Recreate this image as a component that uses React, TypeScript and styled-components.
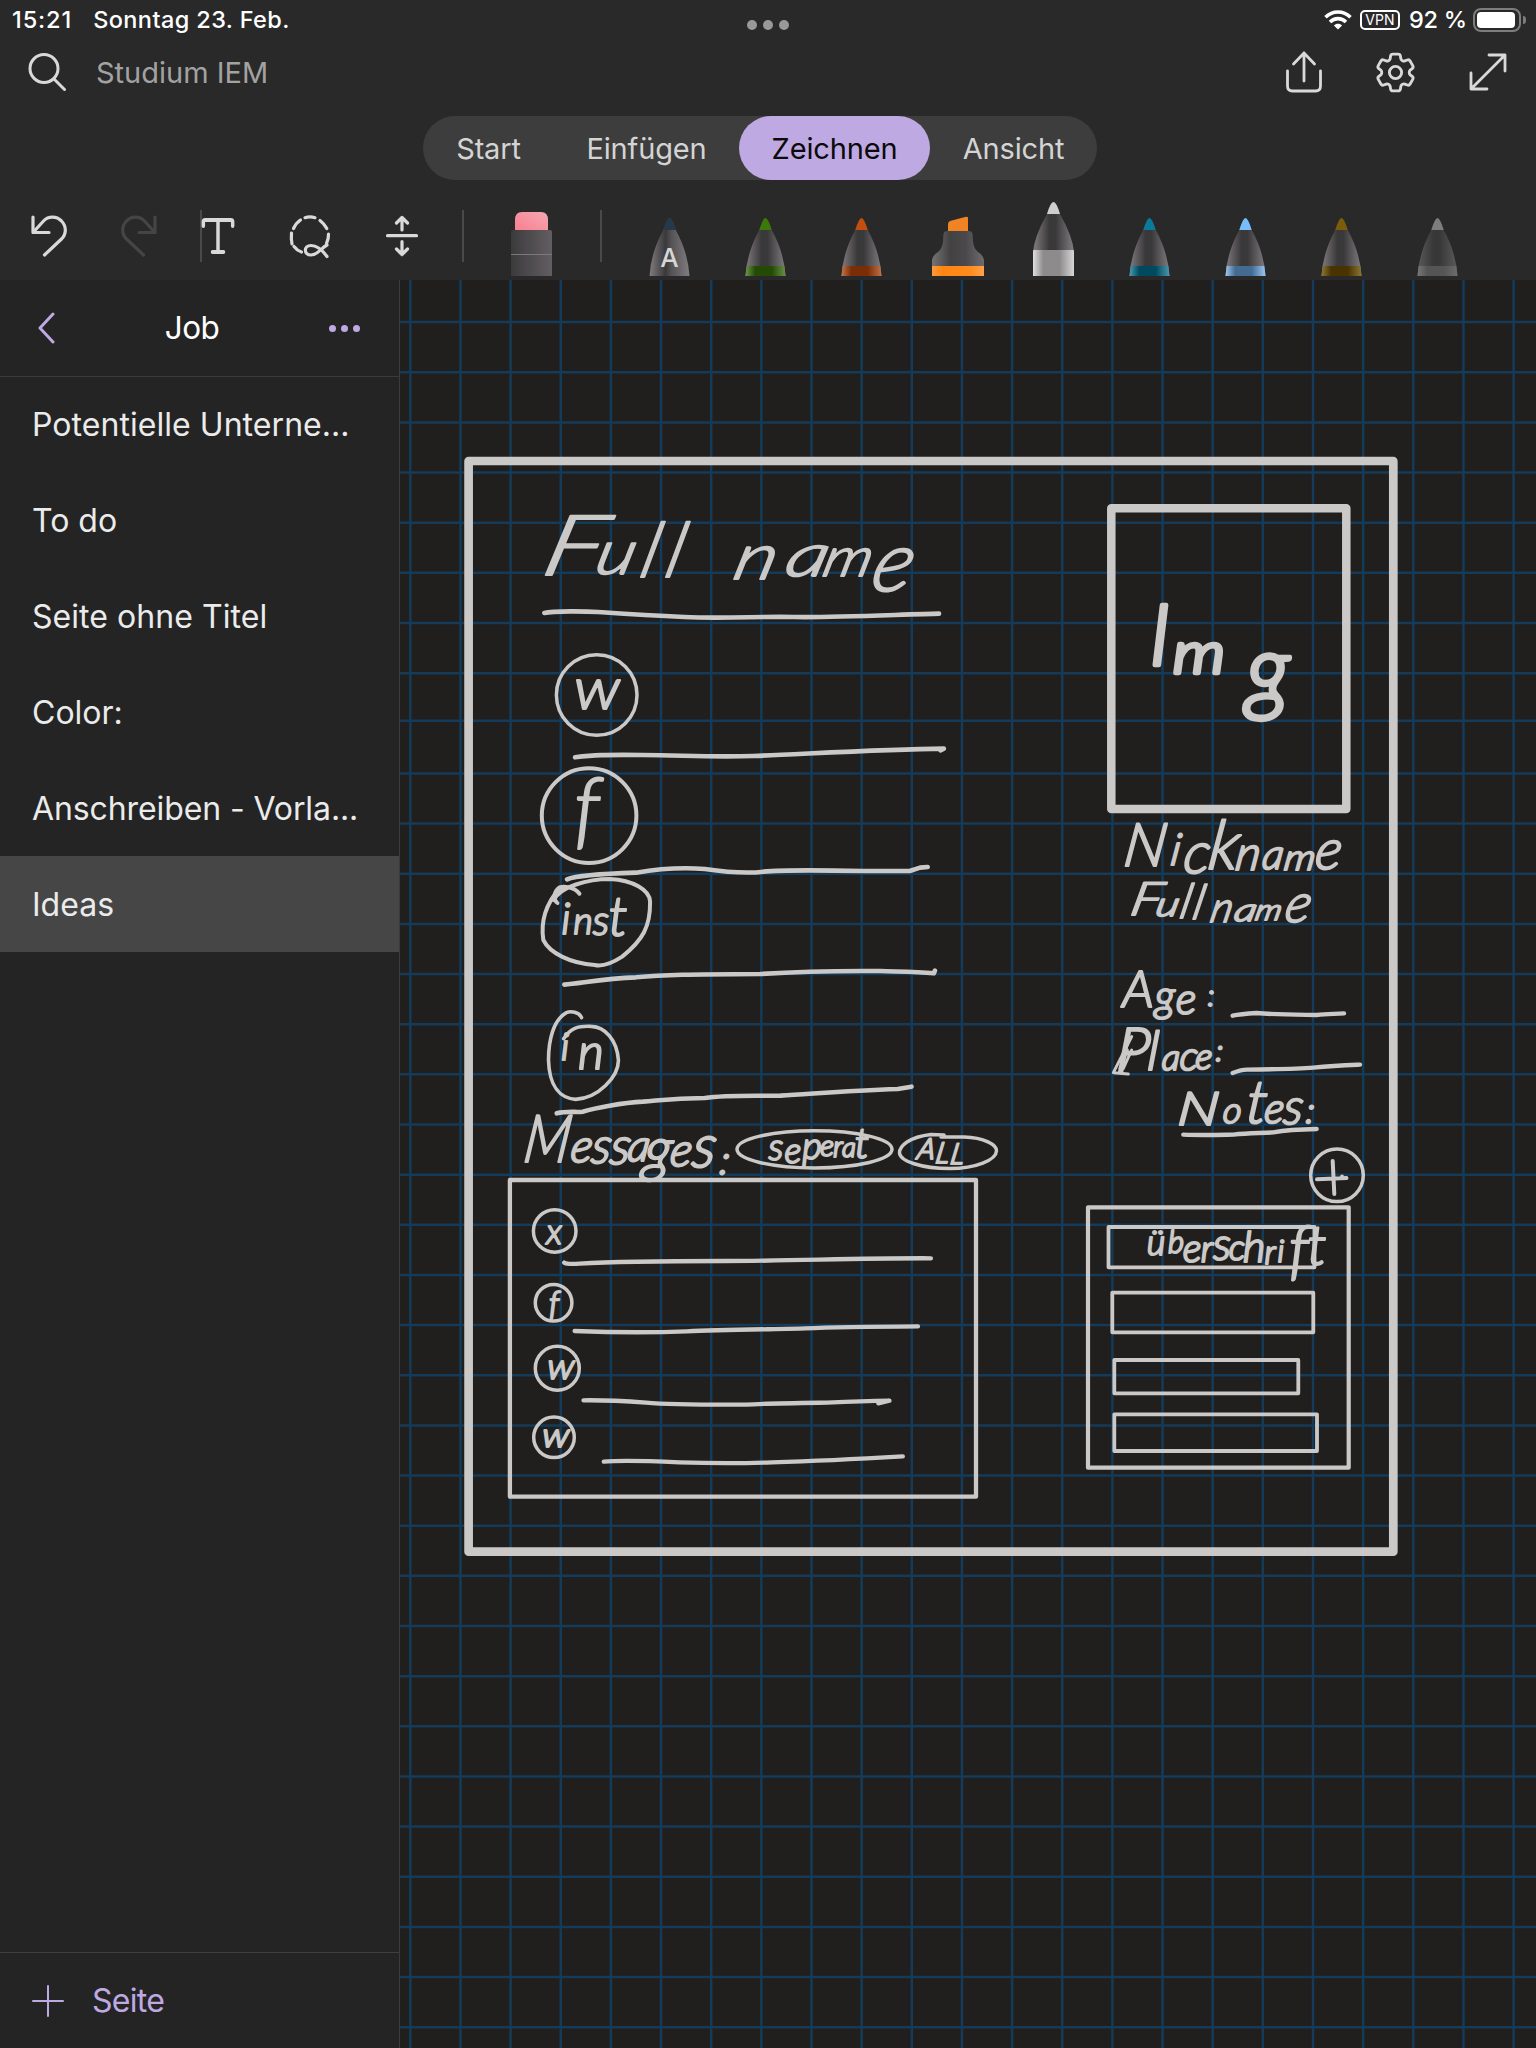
import React from "react";
import styled, { createGlobalStyle } from "styled-components";
import { Type } from "lucide-react";
import { HiOutlineCog6Tooth } from "react-icons/hi2";

const GlobalStyle = createGlobalStyle`
  * { box-sizing: border-box; }
  body { margin: 0; background: #292929; }
`;

const sans = `Inter, "Liberation Sans", sans-serif`;
const INK = "#cbc9c7";
const GRID = "#143b59";

const Screen = styled.div`
  width: 1536px;
  height: 2048px;
  display: flex;
  flex-direction: column;
  overflow: hidden;
  background: #292929;
  font-family: ${sans};
  color: #d9d9d9;
`;

const Header = styled.header`
  flex: none;
  height: 280px;
  display: flex;
  flex-direction: column;
`;

const StatusBar = styled.div`
  height: 40px;
  display: grid;
  grid-template-columns: 1fr auto 1fr;
  align-items: center;
  padding: 0 10px 0 12px;
  color: #fff;
`;

const StatusGroup = styled.div<{ $end?: boolean }>`
  display: flex;
  align-items: center;
  justify-content: ${(p) => (p.$end ? "flex-end" : "flex-start")};
`;

const StatusText = styled.span<{ $gap?: number; $track?: number }>`
  font-size: 23.5px;
  line-height: 40px;
  font-weight: 500;
  white-space: pre;
  margin-left: ${(p) => p.$gap ?? 0}px;
  letter-spacing: ${(p) => p.$track ?? 0}px;
`;

const Multitask = styled.div`
  display: flex;
  gap: 6px;
  padding: 10px 2px 0 0;
`;

const Dot = styled.i<{ $size: number; $color: string }>`
  width: ${(p) => p.$size}px;
  height: ${(p) => p.$size}px;
  border-radius: 50%;
  background: ${(p) => p.$color};
`;

const VpnBadge = styled.span`
  width: 40px;
  height: 20px;
  margin-left: 8px;
  border: 2px solid #fff;
  border-radius: 5px;
  font-size: 14px;
  line-height: 16px;
  text-align: center;
`;

const Battery = styled.span`
  width: 48px;
  height: 24px;
  margin-left: 6px;
  padding: 2px;
  border: 2px solid #7d7d7d;
  border-radius: 8px;
  display: flex;
`;

const BatteryLevel = styled.span`
  width: 38px;
  border-radius: 4px;
  background: #fff;
`;

const BatteryNub = styled.span`
  width: 3px;
  height: 8px;
  margin-left: 2px;
  border-radius: 0 3px 3px 0;
  background: #7d7d7d;
`;

const NavBar = styled.div`
  height: 64px;
  display: flex;
  align-items: center;
  padding: 0 29px 0 28px;
`;

const NotebookTitle = styled.h1`
  margin: 0 0 0 30px;
  flex: 1;
  font-size: 29px;
  font-weight: 400;
  letter-spacing: 0;
  color: #a2a2a2;
`;

const NavActions = styled.div`
  display: flex;
  align-items: center;
  gap: 49px;
`;

const Tabs = styled.nav`
  width: 674px;
  height: 64px;
  margin: 12px 0 0 423px;
  display: flex;
  border-radius: 32px;
  background: #3d3d3d;
`;

const Tab = styled.button<{ $width: number; $active?: boolean }>`
  width: ${(p) => p.$width}px;
  padding: 1px 0 0;
  border: 0;
  border-radius: 32px;
  font-family: ${sans};
  font-size: 29px;
  letter-spacing: -0.15px;
  color: ${(p) => (p.$active ? "#0b0b0b" : "#d4d4d4")};
  background: ${(p) => (p.$active ? "#bea9e2" : "transparent")};
`;

const Toolbar = styled.div`
  height: 100px;
  padding: 0 0 4px 31px;
  display: flex;
  align-items: flex-end;
`;

const Tool = styled.span<{ $gap?: number; $lift?: number }>`
  display: flex;
  margin-left: ${(p) => p.$gap ?? 0}px;
  margin-bottom: ${(p) => p.$lift ?? 20}px;
  svg { display: block; overflow: visible; }
`;

const Separator = styled.span<{ $gap: number }>`
  width: 2px;
  height: 52px;
  margin: 0 0 14px ${(p) => p.$gap}px;
  background: #4a4a4a;
`;

const PenTray = styled.div`
  display: flex;
  align-items: flex-end;
  margin-left: 19.5px;
`;

const PenSlot = styled.span`
  width: 96px;
  display: flex;
  justify-content: center;
  svg { display: block; }
`;

const Body = styled.div`
  flex: 1;
  display: flex;
  min-height: 0;
`;

const Sidebar = styled.aside`
  width: 400px;
  flex: none;
  display: flex;
  flex-direction: column;
  background: #242424;
  border-right: 1px solid #3b3b3b;
`;

const SidebarHeader = styled.div`
  height: 97px;
  padding: 0 39px 0 38px;
  display: flex;
  align-items: center;
  justify-content: space-between;
  border-bottom: 1px solid #3b3b3b;
`;

const SectionTitle = styled.h2`
  margin: 0 0 2px;
  font-size: 31.5px;
  font-weight: 420;
  letter-spacing: -0.6px;
  color: #fff;
`;

const More = styled.span`
  display: flex;
  gap: 5px;
`;

const PageList = styled.ul`
  flex: 1;
  margin: -1px 0 0;
  padding: 0;
  list-style: none;
`;

const PageItem = styled.li<{ $selected?: boolean; $track?: number }>`
  height: 96px;
  padding-left: 32px;
  font-size: 32px;
  line-height: 98px;
  letter-spacing: ${(p) => p.$track ?? 0}px;
  white-space: nowrap;
  color: #ebebeb;
  background: ${(p) => (p.$selected ? "#464646" : "transparent")};
`;

const AddPage = styled.button`
  height: 96px;
  padding: 0 0 0 32px;
  display: flex;
  align-items: center;
  gap: 28px;
  border: 0;
  border-top: 1px solid #3f3f3f;
  background: none;
  font-family: ${sans};
  font-size: 32px;
  letter-spacing: -0.7px;
  color: #bea9e2;
`;

const Canvas = styled.main`
  flex: 1;
  background: #201f1d;
`;

const Page = styled.svg`
  display: block;
  width: 1136px;
  height: 1768px;
`;

const Ink = styled.g`
  fill: none;
  stroke: ${INK};
  stroke-linecap: round;
  stroke-linejoin: round;
  path, ellipse, rect { vector-effect: non-scaling-stroke; }
`;

const Script = styled.text<{ $bold: number }>`
  font-family: Lato, "Liberation Sans", sans-serif;
  font-weight: 300;
  font-style: italic;
  text-anchor: middle;
  fill: ${INK};
  stroke: ${INK};
  stroke-width: ${(p) => p.$bold}px;
  stroke-linejoin: round;
  white-space: pre;
`;

const line = {
  fill: "none",
  stroke: "#d9d9d9",
  strokeWidth: 3,
  strokeLinecap: "round" as const,
  strokeLinejoin: "round" as const,
};

const WifiIcon = () => (
  <svg width="28" height="20" viewBox="0 0 28 20" fill="none" stroke="#fff" strokeWidth="3.6">
    <path d="M1.5 7.2C8.5 0.2 19.5 0.2 26.5 7.2" />
    <path d="M6 12C10.5 7.5 17.5 7.5 22 12" />
    <path d="M14 19.6L9.9 15.4C12.2 13.2 15.8 13.2 18.1 15.4Z" fill="#fff" stroke="none" />
  </svg>
);

const SearchIcon = () => (
  <svg width="38" height="38" viewBox="0 0 38 38" {...line}>
    <circle cx="16" cy="15.5" r="14" />
    <path d="M26 26L36.500 36.500" />
  </svg>
);

const ShareIcon = () => (
  <svg width="36" height="42" viewBox="0 0 36 42" {...line} strokeWidth={2.8}>
    <path d="M18 30V2M7.500 13L18 2L28.500 13" />
    <path d="M1.500 20V35Q1.500 40 6.500 40H29.500Q34.500 40 34.500 35V20" />
  </svg>
);

const ExpandIcon = () => (
  <svg width="38" height="38" viewBox="0 0 38 38" {...line} strokeWidth={2.8}>
    <path d="M2 36L36 2M20 2H36V18M2 20V36H18" />
  </svg>
);

const TurnArrow = ({ flip, color }: { flip?: boolean; color: string }) => (
  <svg width="36" height="40" viewBox="0 0 36 40" {...line} stroke={color} strokeWidth={3.2}>
    <g transform={flip ? "translate(36 0) scale(-1 1)" : undefined}>
      <path d="M2 1V16.500H18" />
      <path d="M2.500 16L12.500 5C17.500 -0.200 25.500 0 30.500 5C35.700 10.500 35.500 18 30.500 23L13.500 39" />
    </g>
  </svg>
);

const LassoIcon = () => (
  <svg width="40" height="42" viewBox="0 0 40 42" {...line} strokeWidth={3.2}>
    <path d="M15 2.700Q20 1 25 2.700M30 5.500Q34.500 9 36.800 13.500M38.500 19Q38.700 24 36.500 28.500M2 29Q1 24 1.500 18M3.500 13.500Q6 8 10.500 5M4 31.500Q7 35.500 11.500 37" />
    <path d="M37 30C31 33 28 40 21 40C13.500 40 13.500 30.500 21 30.500C28 30.500 33 36 37 41.500" />
  </svg>
);

const InsertSpaceIcon = () => (
  <svg width="32" height="40" viewBox="0 0 32 40" {...line} strokeWidth={3.2}>
    <path d="M1.500 19.700H30.500M16 14V1.500M10.500 7L16 1.500L21.500 7M16 25.500V38.500M10.500 33L16 38.500L21.500 33" />
  </svg>
);

const EraserIcon = () => (
  <svg width="41" height="64" viewBox="0 0 41 64">
    <defs>
      <linearGradient id="rubber" x1="0" y1="1" x2="1" y2="0">
        <stop offset="0" stopColor="#fb7c8c" />
        <stop offset="1" stopColor="#f3a9b4" />
      </linearGradient>
      <linearGradient id="sleeve">
        <stop offset="0" stopColor="#3b3a3b" />
        <stop offset="0.3" stopColor="#484648" />
        <stop offset="1" stopColor="#625d61" />
      </linearGradient>
    </defs>
    <path d="M4 20V8Q4 0 11 0H30Q37 0 37 8V20Z" fill="url(#rubber)" />
    <path d="M0 64V20Q0 18 2 18H39Q41 18 41 20V64Z" fill="url(#sleeve)" />
    <path d="M0 42.500H41" stroke="#7b787a" />
  </svg>
);

type PenProps = { id: string; tip: string; band?: [string, string, string]; tall?: boolean; letter?: string; dim?: boolean };

const Pen = ({ id, tip, band, tall, letter, dim }: PenProps) => {
  const h = tall ? 74 : 58;
  const edge = dim ? "#5b5b5b" : "#827d81";
  const mid = dim ? "#383838" : "#3a393a";
  return (
    <svg width="41" height={h} viewBox={`0 0 41 ${h}`}>
      <defs>
        <linearGradient id={`${id}-body`}>
          <stop offset="0" stopColor={edge} />
          <stop offset="0.4" stopColor={mid} />
          <stop offset="0.55" stopColor={letter ? "#555355" : mid} />
          <stop offset="1" stopColor={edge} />
        </linearGradient>
        {band && (
          <linearGradient id={`${id}-band`}>
            <stop offset="0" stopColor={band[0]} />
            <stop offset="0.25" stopColor={band[1]} />
            <stop offset="0.65" stopColor={band[1]} />
            <stop offset="1" stopColor={band[2]} />
          </linearGradient>
        )}
        <clipPath id={`${id}-shape`}>
          <path
            d={
              tall
                ? "M0 74V50Q1.500 34 14 12Q17.500 0 20.500 0Q23.500 0 27 12Q39.500 34 41 50V74Z"
                : "M0.500 58Q2 34 14.300 12Q18 0 20.500 0Q23 0 26.700 12Q39 34 40.500 58Z"
            }
          />
        </clipPath>
      </defs>
      <g clipPath={`url(#${id}-shape)`}>
        <rect width="41" height={h} fill={`url(#${id}-body)`} />
        <rect width="41" height="12" fill={tip} />
        {band && <rect y="48" width="41" height="30" fill={`url(#${id}-band)`} />}
      </g>
      {letter && (
        <text x="20.500" y="48.500" textAnchor="middle" fontFamily="Inter, sans-serif" fontSize="26" fontWeight="500" fill="#d6d6d6">
          {letter}
        </text>
      )}
    </svg>
  );
};

const Highlighter = () => (
  <svg width="52" height="60" viewBox="0 0 52 60">
    <defs>
      <linearGradient id="marker-body">
        <stop offset="0" stopColor="#777275" />
        <stop offset="0.35" stopColor="#434243" />
        <stop offset="0.65" stopColor="#4b494b" />
        <stop offset="1" stopColor="#6f6a6e" />
      </linearGradient>
      <linearGradient id="marker-band">
        <stop offset="0" stopColor="#ff9a3a" />
        <stop offset="0.2" stopColor="#ff8513" />
        <stop offset="0.75" stopColor="#ff8c1d" />
        <stop offset="1" stopColor="#ffa34c" />
      </linearGradient>
    </defs>
    <path d="M16 17V8Q16 6 18 5L33 1Q36 0 36 2V17Z" fill="#f08425" />
    <path d="M0 50V44Q1 39 6 36Q10 33 11 26L11.500 18Q12 15 15 15H37Q40 15 40.500 18L41 26Q42 33 46 36Q51 39 52 44V50Z" fill="url(#marker-body)" />
    <rect y="50" width="52" height="10" fill="url(#marker-band)" />
  </svg>
);

type Letter = [char: string, x: number, y: number, size: number, width?: number];
type WordProps = { letters: Letter[]; slant?: number; bold?: number };

/* A handwritten word: each letter sits at its own centre, height, size and, where given, width. */
const Word = ({ letters, slant = 0, bold = 2 }: WordProps) => {
  const base = letters[0][2];
  return (
    <Script $bold={bold} transform={`translate(0 ${base}) skewX(${-slant})`}>
      {letters.map(([char, x, y, size, width], i) => (
        <tspan
          key={i}
          x={x}
          y={y - base}
          fontSize={size}
          textLength={width}
          lengthAdjust={width ? "spacingAndGlyphs" : undefined}
        >
          {char}
        </tspan>
      ))}
    </Script>
  );
};

const words: WordProps[] = [
  { slant: 14, bold: 1.9, letters: [["F", 569, 575, 84, 60], ["u", 612, 574, 62, 39], ["l", 646, 577, 76], ["l", 671, 577, 76], [" ", 700, 577, 40], ["n", 753, 579, 64, 42], ["a", 804, 576, 60, 42], ["m", 845, 576, 54, 48], ["e", 892, 591, 84, 40]] },
  { letters: [["w", 597, 709, 58, 46]] },
  { letters: [["f", 587, 838, 84]] },
  { letters: [["i", 566, 934, 44], ["n", 583, 934, 38], ["s", 601, 935, 42], ["t", 618, 936, 56]] },
  { bold: 2.2, letters: [["i", 565, 1060, 38], ["n", 591, 1069, 50]] },
  { slant: 8, bold: 2.2, letters: [["M", 545, 1162, 66, 46], ["e", 580, 1162, 46], ["s", 600, 1163, 50], ["s", 619, 1164, 52], ["a", 637, 1161, 44], ["g", 657, 1170, 60], ["e", 680, 1166, 46], ["s", 703, 1167, 60], [":", 725, 1174, 40]] },
  { bold: 2, letters: [["s", 776, 1160, 38], ["e", 793, 1163, 36], ["p", 812, 1159, 38], ["e", 827, 1156, 30], ["r", 838, 1157, 30], ["a", 849, 1157, 28], ["t", 862, 1158, 42]] },
  { slant: 10, bold: 2, letters: [["A", 925, 1159, 29], ["L", 942, 1163, 29], ["L", 957, 1164, 29]] },
  { letters: [["x", 554, 1244, 36]], bold: 1.8 },
  { letters: [["f", 554, 1315, 33]] },
  { letters: [["w", 560, 1379, 36, 27]], slant: 4 },
  { letters: [["w", 555, 1447, 34, 27]], slant: 4 },
  { bold: 4.4, letters: [["I", 1160, 665, 84], ["m", 1199, 673, 58, 52], ["g", 1268, 702, 94]] },
  { slant: 8, bold: 2.1, letters: [["N", 1143, 866, 60, 42], ["i", 1174, 865, 44], ["c", 1196, 873, 58], ["k", 1222, 869, 68], ["n", 1247, 870, 48], ["a", 1272, 869, 42], ["m", 1299, 870, 36, 31], ["e", 1327, 869, 56]] },
  { slant: 12, bold: 1.9, letters: [["F", 1144, 915, 46, 31], ["u", 1166, 916, 34, 23], ["l", 1184, 918, 48], ["l", 1197, 919, 48], ["n", 1221, 922, 42], ["a", 1245, 921, 32, 22], ["m", 1268, 920, 29, 26], ["e", 1297, 922, 54]] },
  { bold: 2.1, letters: [["A", 1138, 1007, 52], ["g", 1165, 1011, 44], ["e", 1186, 1014, 44], [":", 1211, 1006, 30]] },
  { slant: 4, bold: 2.2, letters: [["P", 1132, 1072, 62], ["l", 1152, 1070, 54], ["a", 1170, 1070, 36], ["c", 1188, 1070, 40], ["e", 1203, 1069, 36], [":", 1218, 1061, 30]] },
  { slant: 6, bold: 2.2, letters: [["N", 1197, 1125, 46, 41], ["o", 1231, 1123, 36], ["t", 1255, 1123, 60], ["e", 1273, 1123, 42], ["s", 1292, 1124, 50], [":", 1309, 1123, 36]] },
  { bold: 2.1, letters: [["ü", 1156, 1255, 36], ["b", 1176, 1253, 31], ["e", 1192, 1262, 40], ["r", 1207, 1262, 38], ["s", 1222, 1260, 46], ["c", 1237, 1260, 36], ["h", 1254, 1262, 44], ["r", 1270, 1264, 34], ["i", 1281, 1262, 32], ["f", 1299, 1272, 66], ["t", 1317, 1265, 56]] },
];

const verticals = Array.from({ length: 23 }, (_, i) => 410.3 + i * 50.15);
const horizontals = Array.from({ length: 35 }, (_, i) => (i === 8 ? 720.7 : 322.1 + i * 50.15));

const Sketch = () => (
  <Page viewBox="400 280 1136 1768">
    <g stroke={GRID} strokeWidth="2.5">
      {verticals.map((x) => (
        <path key={x} d={`M${x} 280V2048`} />
      ))}
      {horizontals.map((y) => (
        <path key={y} d={`M400 ${y}H1536`} />
      ))}
    </g>
    <Ink>
      <rect x="468.600" y="461" width="924.700" height="1090.700" strokeWidth="8.700" />
      <rect x="1111.300" y="508.300" width="235" height="300.700" strokeWidth="8.500" />
      <rect x="509.900" y="1180" width="466.100" height="316.700" strokeWidth="4.300" />
      <rect x="1088" y="1207.300" width="260.700" height="260.400" strokeWidth="4.200" />
      <g strokeWidth="3.800">
        <rect x="1108.500" y="1227" width="206" height="40.300" />
        <rect x="1112.300" y="1292.700" width="201" height="39.600" />
        <rect x="1114.300" y="1360" width="184" height="33.300" />
        <rect x="1114.300" y="1414.300" width="202.700" height="36.700" />
      </g>
      <g strokeWidth="3.500">
        <ellipse cx="596.700" cy="695" rx="40.300" ry="40.300" />
        <ellipse cx="589.100" cy="815.600" rx="47.300" ry="47.300" strokeWidth="4" />
        <ellipse cx="554.700" cy="1231" rx="21.300" ry="21.300" />
        <ellipse cx="553.600" cy="1302.700" rx="18.300" ry="18.300" />
        <ellipse cx="557.300" cy="1368.300" rx="22" ry="22" />
        <ellipse cx="554" cy="1437.300" rx="20.300" ry="20.300" />
        <ellipse cx="814.500" cy="1149.300" rx="77.500" ry="18.600" />
        <path d="M899.500 1153C899.500 1146 909 1137 931 1134.500L944 1135M941 1137L964 1137C984 1137.500 997 1145 996.500 1151C996 1160 976 1168.500 950 1168.500C921 1168.500 900 1161 899.500 1153" />
        <ellipse cx="1337" cy="1175.300" rx="26.300" ry="26.300" />
        <path d="M1332.700 1161L1334.300 1194M1317 1179.300L1346.500 1178M1342 1176.500L1341 1178" strokeWidth="4" />
      </g>
      <g transform="translate(450 440) scale(.34439 .33333)" strokeWidth="4.600">
        <path d="M274 519C300 512 400 514 430 516S560 525 680 531S900 528 1000 531S1340 522 1420 521" />
        <path d="M363 952C420 945 440 944 560 945S760 952 880 948S1250 928 1434 926L1424 931" />
        <path d="M340 1318C370 1305 480 1300 540 1298C620 1284 700 1284 740 1287C800 1296 870 1300 910 1295C960 1290 1060 1290 1200 1293L1335 1293L1365 1283L1387 1281" />
      </g>
      <g transform="translate(450 860) scale(.34439 .33333)" strokeWidth="4">
        <path d="M376 101C360 80 330 78 318 82C300 95 300 120 312 129M301 120C320 80 400 57 465 57C530 60 580 90 581 125C582 200 560 240 500 290C470 310 440 320 420 315C350 310 290 280 271 240C262 180 280 130 318 85" />
        <path d="M332 374C380 370 450 355 540 352C620 344 700 343 900 342C1000 335 1120 332 1250 333C1300 335 1350 335 1405 340L1408 332" strokeWidth="4.600" />
        <path d="M382 473C375 455 350 453 338 458C300 480 286 540 286 600C288 680 320 715 365 718C430 715 490 650 489 600C485 540 450 500 410 499C370 497 350 505 330 536" strokeWidth="3.600" />
        <path d="M310 760C340 752 370 758 385 755C420 745 500 728 560 725C620 720 650 715 740 714C800 705 850 708 960 707C1050 702 1150 692 1300 687L1340 680" strokeWidth="4.600" />
      </g>
      <g transform="translate(450 1100) scale(.3699 .33333)" strokeWidth="4.400">
        <path d="M309 488Q315 493 350 491C450 484 550 483 740 483S1100 474 1300 475" />
        <path d="M337 693C430 697 570 697 640 694C740 690 900 687 960 685C1050 681 1150 680 1265 679" />
        <path d="M361 901C430 900 480 904 530 908C600 915 700 914 800 914C850 910 950 909 1020 908C1080 905 1130 903 1188 902L1158 910" />
        <path d="M416 1085C460 1080 540 1083 620 1087C700 1090 800 1090 870 1087C960 1084 1100 1077 1224 1069" />
      </g>
      <g transform="translate(1060 940) scale(.33333)" strokeWidth="4.400">
        <path d="M518 227Q540 222 590 219C640 224 700 224 770 225C800 222 820 222 852 220" />
        <path d="M518 399Q545 389 560 389C650 388 710 387 760 383C820 377 850 376 900 374" />
        <path d="M370 584C420 586 460 585 520 584C570 578 600 580 640 577C680 570 720 568 770 567" />
        <path d="M215 290L160 398L205 402M202 330L180 385M190 385L215 330" strokeWidth="3" />
      </g>
    </Ink>
    {words.map((word, i) => (
      <Word key={i} {...word} />
    ))}
  </Page>
);

const pages: { title: string; track?: number; selected?: boolean }[] = [
  { title: "Potentielle Unterne...", track: 0.05 },
  { title: "To do" },
  { title: "Seite ohne Titel", track: 0.05 },
  { title: "Color:" },
  { title: "Anschreiben - Vorla...", track: -0.1 },
  { title: "Ideas", selected: true },
];

const tabs = [
  { label: "Start", width: 131 },
  { label: "Einfügen", width: 185 },
  { label: "Zeichnen", width: 191, active: true },
  { label: "Ansicht", width: 167 },
];

const pens: PenProps[] = [
  { id: "ballpoint", tip: "#26384c", letter: "A" },
  { id: "green", tip: "#3a7a08", band: ["#6f9a4d", "#244a06", "#6a9448"] },
  { id: "rust", tip: "#c24e10", band: ["#c47a52", "#7a2d06", "#c2734a"] },
];

const morePens: PenProps[] = [
  { id: "white", tip: "#cfcecd", band: ["#e0dfdf", "#8d8b8c", "#d8d7d7"], tall: true },
  { id: "teal", tip: "#0a7a9c", band: ["#4f9fb5", "#004a60", "#4d9bb0"] },
  { id: "sky", tip: "#78bdfb", band: ["#a3cdf3", "#446c93", "#9ccaf5"] },
  { id: "olive", tip: "#7c5c0a", band: ["#8f7a3c", "#493300", "#8c773a"] },
  { id: "grey", tip: "#7d7d7d", band: ["#7a7a7a", "#555555", "#6d6d6d"], dim: true },
];

export default function App() {
  return (
    <>
      <GlobalStyle />
      <Screen>
        <Header>
          <StatusBar>
            <StatusGroup>
              <StatusText $track={0.9}>15:21</StatusText>
              <StatusText $gap={21} $track={0.4}>Sonntag 23. Feb.</StatusText>
            </StatusGroup>
            <Multitask>
              {[0, 1, 2].map((i) => (
                <Dot key={i} $size={10} $color="#999" />
              ))}
            </Multitask>
            <StatusGroup $end>
              <WifiIcon />
              <VpnBadge>VPN</VpnBadge>
              <StatusText $gap={9} $track={-0.2}>92 %</StatusText>
              <Battery>
                <BatteryLevel />
              </Battery>
              <BatteryNub />
            </StatusGroup>
          </StatusBar>
          <NavBar>
            <SearchIcon />
            <NotebookTitle>Studium IEM</NotebookTitle>
            <NavActions>
              <ShareIcon />
              <HiOutlineCog6Tooth size={49} color="#d9d9d9" strokeWidth={1.4} />
              <ExpandIcon />
            </NavActions>
          </NavBar>
          <Tabs>
            {tabs.map((tab) => (
              <Tab key={tab.label} $width={tab.width} $active={tab.active}>
                {tab.label}
              </Tab>
            ))}
          </Tabs>
          <Toolbar>
            <Tool><TurnArrow color="#d9d9d9" /></Tool>
            <Tool $gap={54}><TurnArrow flip color="#454545" /></Tool>
            <Separator $gap={43} />
            <Tool $gap={-6} $lift={16}>
              <Type width={44} height={48} color="#d9d9d9" strokeWidth={1.9} preserveAspectRatio="none" />
            </Tool>
            <Tool $gap={50} $lift={19}><LassoIcon /></Tool>
            <Tool $gap={56}><InsertSpaceIcon /></Tool>
            <Separator $gap={44} />
            <Tool $gap={47} $lift={0}><EraserIcon /></Tool>
            <Separator $gap={48} />
            <PenTray>
              {pens.map((pen) => (
                <PenSlot key={pen.id}><Pen {...pen} /></PenSlot>
              ))}
              <PenSlot><Highlighter /></PenSlot>
              {morePens.map((pen) => (
                <PenSlot key={pen.id}><Pen {...pen} /></PenSlot>
              ))}
            </PenTray>
          </Toolbar>
        </Header>
        <Body>
          <Sidebar>
            <SidebarHeader>
              <svg width="17" height="32" viewBox="0 0 17 32" {...line} stroke="#bea9e2">
                <path d="M15 2L2 16L15 30" />
              </svg>
              <SectionTitle>Job</SectionTitle>
              <More>
                {[0, 1, 2].map((i) => (
                  <Dot key={i} $size={7} $color="#bea9e2" />
                ))}
              </More>
            </SidebarHeader>
            <PageList>
              {pages.map((page) => (
                <PageItem key={page.title} $selected={page.selected} $track={page.track}>
                  {page.title}
                </PageItem>
              ))}
            </PageList>
            <AddPage>
              <svg width="32" height="32" viewBox="0 0 32 32" {...line} stroke="#bea9e2" strokeWidth={2}>
                <path d="M1 16H31M16 1V31" />
              </svg>
              Seite
            </AddPage>
          </Sidebar>
          <Canvas>
            <Sketch />
          </Canvas>
        </Body>
      </Screen>
    </>
  );
}
